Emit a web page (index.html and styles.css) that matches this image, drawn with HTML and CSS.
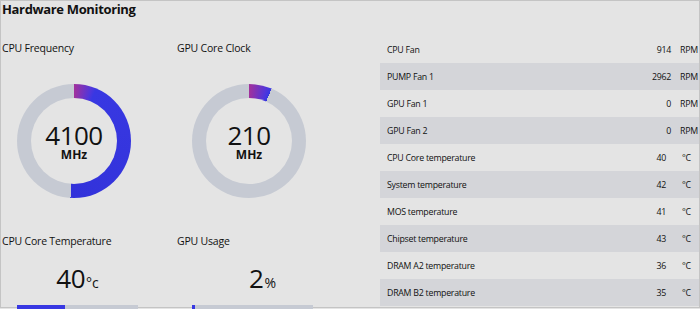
FILE: index.html
```html
<!DOCTYPE html>
<html lang="en">
<head>
    <meta charset="UTF-8">
    <title>Hardware Monitoring</title>
    <link rel="stylesheet" href="styles.css">
</head>
<body>
    <div class="frame">
        <div class="gauges">
            <h1>Hardware Monitoring</h1>
            <div class="grid">
                <div class="gauge">
                    <div class="label">CPU Frequency</div>
                    <div class="donut" style="--pct: 51%">
                        <div class="hole">
                            <span class="big">4100</span>
                            <span class="unit">MHz</span>
                        </div>
                    </div>
                </div>
                <div class="gauge">
                    <div class="label">GPU Core Clock</div>
                    <div class="donut" style="--pct: 6.5%">
                        <div class="hole">
                            <span class="big">210</span>
                            <span class="unit">MHz</span>
                        </div>
                    </div>
                </div>
                <div class="gauge lower">
                    <div class="label">CPU Core Temperature</div>
                    <div class="reading"><span class="big">40</span><span class="small">°c</span></div>
                    <div class="bar"><div class="fill" style="width: 40%"></div></div>
                </div>
                <div class="gauge lower">
                    <div class="label">GPU Usage</div>
                    <div class="reading shift"><span class="big">2</span><span class="small">%</span></div>
                    <div class="bar"><div class="fill" style="width: 2.5%"></div></div>
                </div>
            </div>
        </div>
        <div class="sensors">
            <div class="row"><span class="name">CPU Fan</span><span class="val">914</span><span class="u">RPM</span></div>
            <div class="row"><span class="name">PUMP Fan 1</span><span class="val">2962</span><span class="u">RPM</span></div>
            <div class="row"><span class="name">GPU Fan 1</span><span class="val">0</span><span class="u">RPM</span></div>
            <div class="row"><span class="name">GPU Fan 2</span><span class="val">0</span><span class="u">RPM</span></div>
            <div class="row temp"><span class="name">CPU Core temperature</span><span class="val">40</span><span class="u">°C</span></div>
            <div class="row temp"><span class="name">System temperature</span><span class="val">42</span><span class="u">°C</span></div>
            <div class="row temp"><span class="name">MOS temperature</span><span class="val">41</span><span class="u">°C</span></div>
            <div class="row temp"><span class="name">Chipset temperature</span><span class="val">43</span><span class="u">°C</span></div>
            <div class="row temp"><span class="name">DRAM A2 temperature</span><span class="val">36</span><span class="u">°C</span></div>
            <div class="row temp"><span class="name">DRAM B2 temperature</span><span class="val">35</span><span class="u">°C</span></div>
        </div>
    </div>
</body>
</html>
```

FILE: styles.css
```css
html, body {
    margin: 0;
    height: 309px;
    overflow: hidden;
}
body {
    font-family: "Open Sans", "Noto Sans", sans-serif;
    background: #e4e4e4;
    color: #111;
}
.frame {
    display: flex;
    height: 308px;
    box-sizing: border-box;
    border: 1px solid #c4c4c4;
    background: #e4e4e4;
}
.gauges {
    flex: 0 0 379px;
    padding-left: 1px;
    box-sizing: border-box;
}
h1 {
    font-size: 13px;
    font-weight: 700;
    line-height: 16px;
    margin: 0;
    letter-spacing: -0.35px;
}
.grid {
    display: grid;
    grid-template-columns: 175px 175px;
}
.label {
    font-size: 10.5px;
    line-height: 15px;
    margin-top: 24px;
    letter-spacing: -0.2px;
}
.lower .label {
    margin-top: 36px;
}
.donut {
    width: 114px;
    height: 114px;
    margin: 28px 0 0 15px;
    border-radius: 50%;
    background: conic-gradient(#a3319b 0deg, #5236da 18deg, #3838e2 23deg, #3232da var(--pct), #c6cad3 var(--pct));
    display: flex;
    align-items: center;
    justify-content: center;
}
.hole {
    width: 86px;
    height: 86px;
    border-radius: 50%;
    background: #e4e4e4;
    display: flex;
    flex-direction: column;
    align-items: center;
    justify-content: center;
}
.big {
    font-size: 26px;
    line-height: 24px;
    letter-spacing: -0.5px;
}
.hole .big {
    line-height: 25px;
    margin-top: 2px;
}
.unit {
    font-size: 12px;
    font-weight: 700;
    line-height: 13px;
}
.reading {
    width: 121px;
    margin: 14px 0 0 15px;
    text-align: center;
    line-height: 30px;
}
.reading.shift {
    padding-left: 10px;
}
.reading .big {
    line-height: 30px;
}
.small {
    font-size: 14px;
    margin-left: 1px;
}
.bar {
    width: 121px;
    height: 8px;
    margin: 7px 0 0 15px;
    background: #c6cad3;
}
.fill {
    height: 100%;
    background: #3838e2;
}
.sensors {
    flex: 1;
    margin-top: 35px;
    font-size: 8.8px;
    letter-spacing: -0.25px;
}
.row {
    display: flex;
    align-items: center;
    height: 27px;
    padding-left: 7px;
}
.row:nth-child(even) {
    background: #d4d5d9;
}
.name {
    flex: 1;
}
.val {
    text-align: right;
}
.u {
    width: 19px;
    margin-left: 9px;
    white-space: nowrap;
}
.temp .u {
    width: 17px;
    margin-left: 16px;
}
```
